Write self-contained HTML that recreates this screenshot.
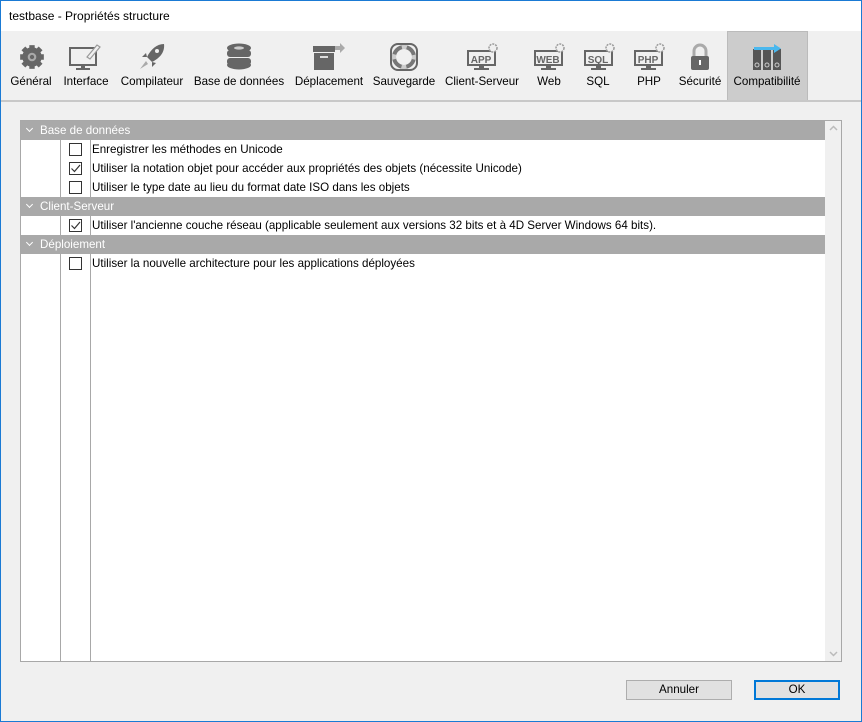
<!DOCTYPE html>
<html><head><meta charset="utf-8"><style>
*{margin:0;padding:0;box-sizing:border-box}
body{width:862px;height:722px;overflow:hidden;font-family:"Liberation Sans",sans-serif;font-size:11.6px;color:#000;background:#f0f0f0;position:relative}
.win{position:absolute;left:0;top:0;width:862px;height:722px;border:1px solid #1a7ad4;border-top:none}
.title{position:absolute;left:0;top:0;width:862px;height:31px;background:#fff;border-top:1px solid #1a7ad4}
.title span{position:absolute;left:9px;top:8px;font-size:12px}
.sel{position:absolute;left:727px;top:31px;width:81px;height:69px;background:#ccc;border:1px solid #bbb;border-bottom:none}
.lbl{position:absolute;top:75px;font-size:11.6px;white-space:nowrap;transform:translateX(-50%)}
.ic{position:absolute;top:43px}
.line{position:absolute;left:1px;top:100px;width:860px;height:2px;background:#c8c8c8}
.box{position:absolute;left:20px;top:120px;width:822px;height:542px;background:#fff;border:1px solid #a8a8a8}
.sb{position:absolute;left:804px;top:0;width:16px;height:540px;background:#f0f0f0}
.hdr{position:absolute;left:0;width:804px;height:19px;background:#a9a9a9;color:#fff;padding:3px 0 0 19px}
.hdr:before{content:"";position:absolute;left:6px;top:5px;width:4px;height:4px;border-right:1.5px solid #fff;border-bottom:1.5px solid #fff;transform:rotate(45deg)}
.row{position:absolute;left:0;width:804px;height:19px}
.row span{position:absolute;left:71px;top:3px;white-space:nowrap}
.cb{position:absolute;left:48px;top:3px;width:13px;height:13px;border:1px solid #333;background:#fff}
.vl{position:absolute;width:1px;background:#a8a8a8}
.btn{position:absolute;top:680px;height:20px;background:#e1e1e1;border:1px solid #adadad;text-align:center;padding-top:2px}
</style></head><body>
<div class="title"><span>testbase - Propriétés structure</span></div>
<div class="sel"></div>
<svg class="ic" style="left:18px" width="28" height="28" viewBox="0 0 26 26"><g fill="#666"><circle cx="13" cy="13" r="9"/><g stroke="#666" stroke-width="5"><line x1="13" y1="2" x2="13" y2="24"/><line x1="2" y1="13" x2="24" y2="13"/><line x1="5" y1="5" x2="21" y2="21"/><line x1="21" y1="5" x2="5" y2="21"/></g></g><circle cx="13" cy="13" r="4" fill="#aaa"/><circle cx="13" cy="13" r="2" fill="#666"/></svg>
<svg class="ic" style="left:69px" width="32" height="28" viewBox="0 0 32 28"><rect x="1" y="5" width="26" height="17" fill="none" stroke="#666" stroke-width="2"/><rect x="12" y="22" width="4" height="3" fill="#666"/><rect x="7" y="25" width="14" height="2" fill="#666"/><path d="M18 14 L28 2 L31 4 L21 16 Z" fill="#f0f0f0" stroke="#999" stroke-width="1.2"/></svg>
<svg class="ic" style="left:137px" width="30" height="28" viewBox="0 0 30 28"><path d="M27 1 C20 1 14 6 10 14 L15 19 C23 15 28 9 27 1 Z" fill="#666"/><circle cx="20" cy="8" r="2" fill="#f0f0f0"/><path d="M10 14 L5 14 L9 10 Z M15 19 L15 24 L19 20 Z" fill="#666"/><path d="M9 18 L3 26 L11 21 Z" fill="#aaa"/></svg>
<svg class="ic" style="left:226px" width="26" height="28" viewBox="0 0 26 28"><ellipse cx="13" cy="5" rx="12" ry="4.5" fill="#666"/><ellipse cx="13" cy="5" rx="5" ry="1.6" fill="#ccc"/><rect x="1" y="7" width="24" height="7" rx="3" fill="#666"/><rect x="1" y="15" width="24" height="7" rx="3" fill="#666"/><ellipse cx="13" cy="22" rx="12" ry="4.5" fill="#666"/></svg>
<svg class="ic" style="left:312px" width="34" height="28" viewBox="0 0 34 28"><rect x="1" y="3" width="22" height="6" fill="#666"/><rect x="2" y="10" width="20" height="17" fill="#666"/><rect x="8" y="13" width="8" height="2" fill="#ddd"/><path d="M23 3 H28 V0 L33 5 L28 10 V7 H23 Z" fill="#aaa"/></svg>
<svg class="ic" style="left:390px" width="28" height="28" viewBox="0 0 28 28"><rect x="1" y="1" width="26" height="26" rx="7" fill="none" stroke="#666" stroke-width="2"/><circle cx="14" cy="14" r="10" fill="none" stroke="#777" stroke-width="4"/><circle cx="14" cy="14" r="10" fill="none" stroke="#ccc" stroke-width="4" stroke-dasharray="5 10.7" stroke-dashoffset="2.5"/></svg>
<svg class="ic" style="left:467px" width="34" height="28" viewBox="0 0 34 28"><rect x="1" y="8" width="27" height="14" fill="none" stroke="#666" stroke-width="2"/><text x="14" y="20" font-family="Liberation Sans" font-weight="bold" font-size="10" fill="#666" text-anchor="middle">APP</text><rect x="12" y="22" width="5" height="3" fill="#666"/><rect x="7" y="25" width="15" height="2" fill="#666"/><circle cx="26" cy="5" r="4" fill="#f0f0f0" stroke="#999" stroke-width="1.5" stroke-dasharray="2 1"/></svg>
<svg class="ic" style="left:534px" width="34" height="28" viewBox="0 0 34 28"><rect x="1" y="8" width="27" height="14" fill="none" stroke="#666" stroke-width="2"/><text x="14" y="20" font-family="Liberation Sans" font-weight="bold" font-size="10" fill="#666" text-anchor="middle">WEB</text><rect x="12" y="22" width="5" height="3" fill="#666"/><rect x="7" y="25" width="15" height="2" fill="#666"/><circle cx="26" cy="5" r="4" fill="#f0f0f0" stroke="#999" stroke-width="1.5" stroke-dasharray="2 1"/></svg>
<svg class="ic" style="left:584px" width="34" height="28" viewBox="0 0 34 28"><rect x="1" y="8" width="27" height="14" fill="none" stroke="#666" stroke-width="2"/><text x="14" y="20" font-family="Liberation Sans" font-weight="bold" font-size="10" fill="#666" text-anchor="middle">SQL</text><rect x="12" y="22" width="5" height="3" fill="#666"/><rect x="7" y="25" width="15" height="2" fill="#666"/><circle cx="26" cy="5" r="4" fill="#f0f0f0" stroke="#999" stroke-width="1.5" stroke-dasharray="2 1"/></svg>
<svg class="ic" style="left:634px" width="34" height="28" viewBox="0 0 34 28"><rect x="1" y="8" width="27" height="14" fill="none" stroke="#666" stroke-width="2"/><text x="14" y="20" font-family="Liberation Sans" font-weight="bold" font-size="10" fill="#666" text-anchor="middle">PHP</text><rect x="12" y="22" width="5" height="3" fill="#666"/><rect x="7" y="25" width="15" height="2" fill="#666"/><circle cx="26" cy="5" r="4" fill="#f0f0f0" stroke="#999" stroke-width="1.5" stroke-dasharray="2 1"/></svg>
<svg class="ic" style="left:689px" width="22" height="28" viewBox="0 0 22 28"><path d="M5 13 V8 A6 6 0 0 1 17 8 V13" fill="none" stroke="#aaa" stroke-width="3"/><rect x="2" y="13" width="18" height="14" rx="2" fill="#666"/><rect x="10" y="17" width="2" height="5" fill="#fff"/></svg>
<svg class="ic" style="left:752px" width="32" height="28" viewBox="0 0 32 28"><rect x="1" y="6" width="8" height="21" fill="#555"/><rect x="11" y="6" width="8" height="21" fill="#555"/><rect x="21" y="6" width="8" height="21" fill="#555"/><g fill="none" stroke="#ccc"><circle cx="5" cy="22" r="2"/><circle cx="15" cy="22" r="2"/><circle cx="25" cy="22" r="2"/></g><path d="M2 4 H22 V1 L29 5.5 L22 10 V7 H2 Z" fill="#4ab8ee"/></svg>
<div class="lbl" style="left:31px">Général</div>
<div class="lbl" style="left:86px">Interface</div>
<div class="lbl" style="left:152px">Compilateur</div>
<div class="lbl" style="left:239px">Base de données</div>
<div class="lbl" style="left:329px">Déplacement</div>
<div class="lbl" style="left:404px">Sauvegarde</div>
<div class="lbl" style="left:482px">Client-Serveur</div>
<div class="lbl" style="left:549px">Web</div>
<div class="lbl" style="left:598px">SQL</div>
<div class="lbl" style="left:649px">PHP</div>
<div class="lbl" style="left:700px">Sécurité</div>
<div class="lbl" style="left:767px">Compatibilité</div>
<div class="line"></div>
<div class="box">
 <div class="vl" style="left:39px;top:19px;height:521px"></div>
 <div class="vl" style="left:69px;top:19px;height:521px"></div>
 <div class="hdr" style="top:0">Base de données</div>
 <div class="row" style="top:19px"><div class="cb"></div><span>Enregistrer les méthodes en Unicode</span></div>
 <div class="row" style="top:38px"><div class="cb"><svg width="11" height="11" viewBox="0 0 11 11"><path d="M1.5 5.5 L4.5 8.5 L10 2" fill="none" stroke="#333" stroke-width="1.2"/></svg></div><span>Utiliser la notation objet pour accéder aux propriétés des objets (nécessite Unicode)</span></div>
 <div class="row" style="top:57px"><div class="cb"></div><span>Utiliser le type date au lieu du format date ISO dans les objets</span></div>
 <div class="hdr" style="top:76px">Client-Serveur</div>
 <div class="row" style="top:95px"><div class="cb"><svg width="11" height="11" viewBox="0 0 11 11"><path d="M1.5 5.5 L4.5 8.5 L10 2" fill="none" stroke="#333" stroke-width="1.2"/></svg></div><span>Utiliser l'ancienne couche réseau (applicable seulement aux versions 32 bits et à 4D Server Windows 64 bits).</span></div>
 <div class="hdr" style="top:114px">Déploiement</div>
 <div class="row" style="top:133px"><div class="cb"></div><span>Utiliser la nouvelle architecture pour les applications déployées</span></div>
 <div class="sb"><svg style="position:absolute;left:4px;top:4px" width="9" height="6"><path d="M1 5 L4.5 1.5 L8 5" fill="none" stroke="#bbb" stroke-width="1.5"/></svg><svg style="position:absolute;left:4px;top:530px" width="9" height="6"><path d="M1 1 L4.5 4.5 L8 1" fill="none" stroke="#bbb" stroke-width="1.5"/></svg></div>
</div>
<div class="btn" style="left:626px;width:106px">Annuler</div>
<div class="btn" style="left:754px;width:86px;border:2px solid #0078d7;padding-top:1px">OK</div>
<div class="win"></div>
</body></html>
